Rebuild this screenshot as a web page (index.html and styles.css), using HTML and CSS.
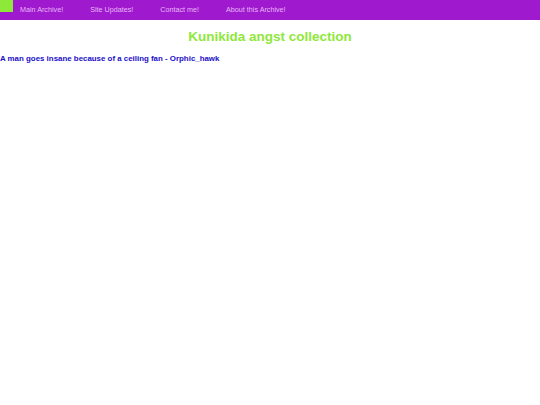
FILE: index.html
```html
<!DOCTYPE html>
<html>
<head>
<meta charset="utf-8">
<link rel="stylesheet" href="styles.css">
</head>
<body>
<nav class="topnav">
  <span class="logo"></span>
  <a class="navlink" href="#">Main Archive!</a>
  <a class="navlink" href="#">Site Updates!</a>
  <a class="navlink" href="#">Contact me!</a>
  <a class="navlink" href="#">About this Archive!</a>
</nav>
<h1 class="title">Kunikida angst collection</h1>
<a class="story" href="#">A man goes insane because of a ceiling fan - Orphic_hawk</a>
</body>
</html>
```
FILE: styles.css
```css
html, body {
  margin: 0;
  padding: 0;
  background: #ffffff;
  font-family: "Liberation Sans", Arial, sans-serif;
}
.topnav {
  display: flex;
  align-items: flex-start;
  height: 20px;
  background: #9f19cf;
}
.logo {
  width: 13px;
  height: 12px;
  background: #8ee83a;
  margin-right: 7px;
}
.navlink {
  color: #e7b8f5;
  text-decoration: none;
  font-size: 7.2px;
  line-height: 20px;
  margin-right: 27px;
}
.title {
  margin: 8px 0 0;
  text-align: center;
  color: #8ee83a;
  font-size: 13.5px;
  line-height: 18px;
  font-weight: bold;
}
.story {
  display: block;
  margin-top: 8px;
  color: #1a10c8;
  font-weight: bold;
  font-size: 7.9px;
  text-decoration: none;
}
```
